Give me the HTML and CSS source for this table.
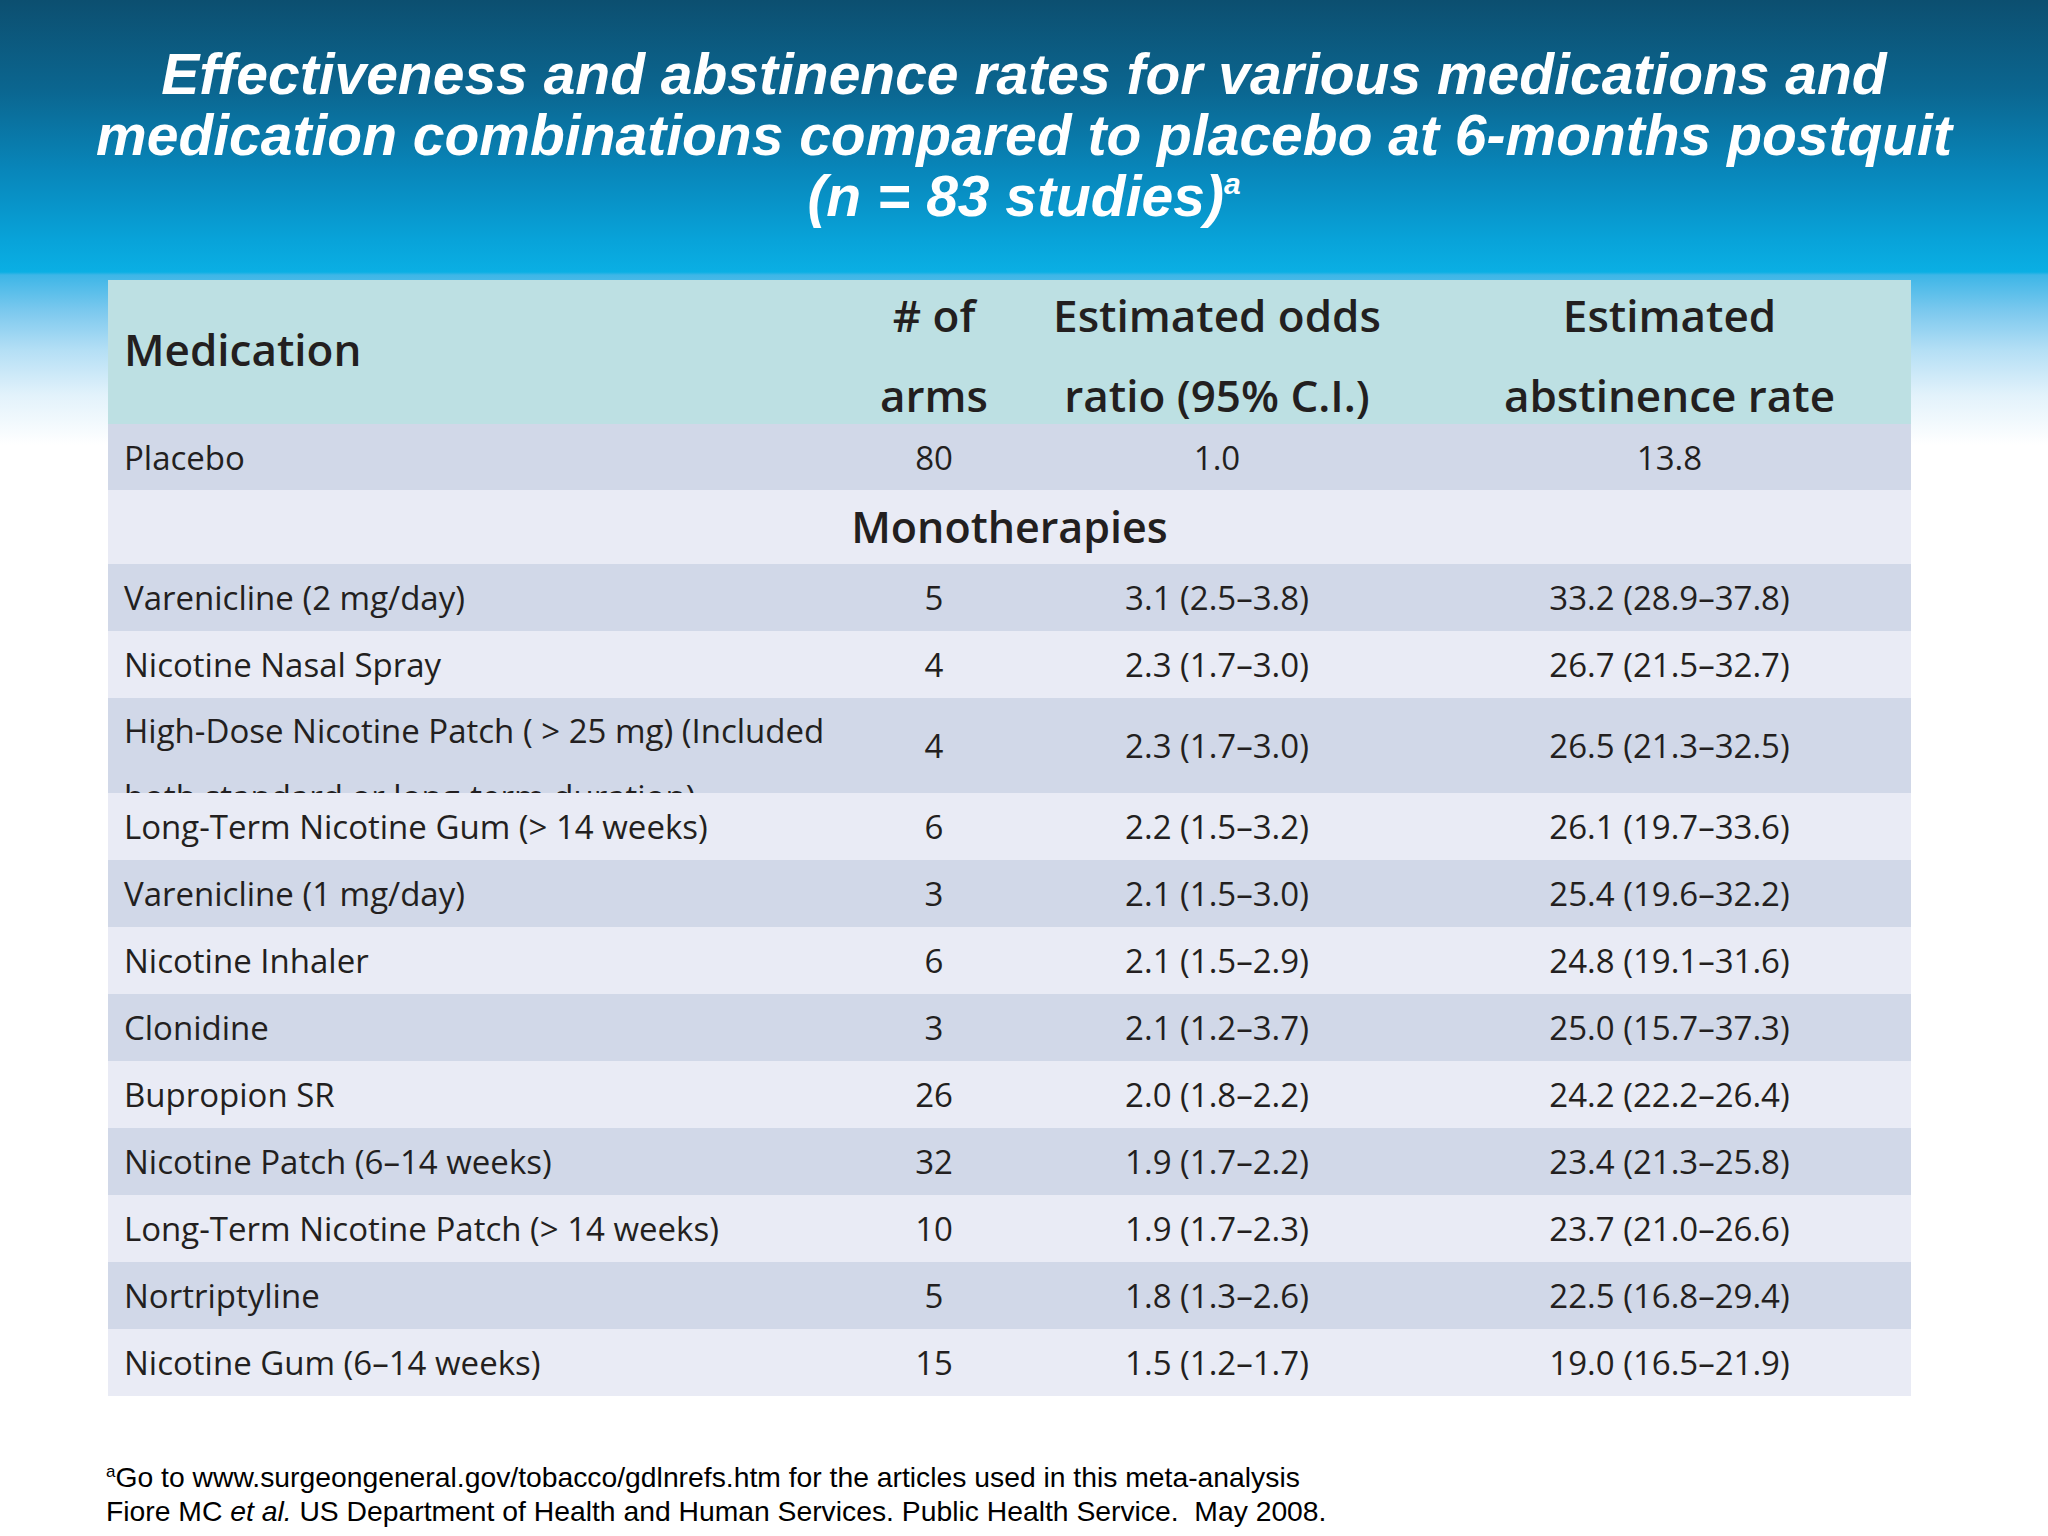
FILE: index.html
```html
<!DOCTYPE html>
<html lang="en">
<head>
<meta charset="utf-8">
<title>Effectiveness and abstinence rates</title>
<link rel="stylesheet" href="styles.css">
</head>
<body>
<div class="slide">
  <h1 class="title">Effectiveness and abstinence rates for various medications and<br>medication combinations compared to placebo at 6-months postquit<br>(n = 83 studies)<sup class="title-sup">a</sup></h1>

  <div class="table">
    <div class="row head">
      <div class="cell med-head">Medication</div>
      <div class="cell num-head">#&nbsp;of<br>arms</div>
      <div class="cell num-head">Estimated odds<br>ratio (95% C.I.)</div>
      <div class="cell num-head">Estimated<br>abstinence rate</div>
    </div>
    <div class="row dark placebo">
      <div class="cell name">Placebo</div>
      <div class="cell val">80</div>
      <div class="cell val">1.0</div>
      <div class="cell val">13.8</div>
    </div>
    <div class="row light section">
      <div class="cell section-title">Monotherapies</div>
    </div>
    <div class="row dark">
      <div class="cell name">Varenicline (2 mg/day)</div>
      <div class="cell val">5</div>
      <div class="cell val">3.1 (2.5–3.8)</div>
      <div class="cell val">33.2 (28.9–37.8)</div>
    </div>
    <div class="row light">
      <div class="cell name">Nicotine Nasal Spray</div>
      <div class="cell val">4</div>
      <div class="cell val">2.3 (1.7–3.0)</div>
      <div class="cell val">26.7 (21.5–32.7)</div>
    </div>
    <div class="row dark tall">
      <div class="cell name wrap">High-Dose Nicotine Patch ( &gt; 25 mg) (Included<br>both standard or long-term duration)</div>
      <div class="cell val">4</div>
      <div class="cell val">2.3 (1.7–3.0)</div>
      <div class="cell val">26.5 (21.3–32.5)</div>
    </div>
    <div class="row light">
      <div class="cell name">Long-Term Nicotine Gum (&gt; 14 weeks)</div>
      <div class="cell val">6</div>
      <div class="cell val">2.2 (1.5–3.2)</div>
      <div class="cell val">26.1 (19.7–33.6)</div>
    </div>
    <div class="row dark">
      <div class="cell name">Varenicline (1 mg/day)</div>
      <div class="cell val">3</div>
      <div class="cell val">2.1 (1.5–3.0)</div>
      <div class="cell val">25.4 (19.6–32.2)</div>
    </div>
    <div class="row light">
      <div class="cell name">Nicotine Inhaler</div>
      <div class="cell val">6</div>
      <div class="cell val">2.1 (1.5–2.9)</div>
      <div class="cell val">24.8 (19.1–31.6)</div>
    </div>
    <div class="row dark">
      <div class="cell name">Clonidine</div>
      <div class="cell val">3</div>
      <div class="cell val">2.1 (1.2–3.7)</div>
      <div class="cell val">25.0 (15.7–37.3)</div>
    </div>
    <div class="row light">
      <div class="cell name">Bupropion SR</div>
      <div class="cell val">26</div>
      <div class="cell val">2.0 (1.8–2.2)</div>
      <div class="cell val">24.2 (22.2–26.4)</div>
    </div>
    <div class="row dark">
      <div class="cell name">Nicotine Patch (6–14 weeks)</div>
      <div class="cell val">32</div>
      <div class="cell val">1.9 (1.7–2.2)</div>
      <div class="cell val">23.4 (21.3–25.8)</div>
    </div>
    <div class="row light">
      <div class="cell name">Long-Term Nicotine Patch (&gt; 14 weeks)</div>
      <div class="cell val">10</div>
      <div class="cell val">1.9 (1.7–2.3)</div>
      <div class="cell val">23.7 (21.0–26.6)</div>
    </div>
    <div class="row dark">
      <div class="cell name">Nortriptyline</div>
      <div class="cell val">5</div>
      <div class="cell val">1.8 (1.3–2.6)</div>
      <div class="cell val">22.5 (16.8–29.4)</div>
    </div>
    <div class="row light">
      <div class="cell name">Nicotine Gum (6–14 weeks)</div>
      <div class="cell val">15</div>
      <div class="cell val">1.5 (1.2–1.7)</div>
      <div class="cell val">19.0 (16.5–21.9)</div>
    </div>
  </div>

  <div class="footnote">
    <div class="fn-line"><sup class="fn-sup">a</sup>Go to www.surgeongeneral.gov/tobacco/gdlnrefs.htm for the articles used in this meta-analysis</div>
    <div class="fn-line">Fiore MC <em>et al.</em> US Department of Health and Human Services. Public Health Service.&nbsp; May 2008.</div>
  </div>
</div>
</body>
</html>
```

FILE: styles.css
```css
html, body {
  margin: 0;
  padding: 0;
}

body {
  width: 2048px;
  height: 1536px;
  overflow: hidden;
  background: linear-gradient(to bottom,
    #0c4f70 0px,
    #0b6690 90px,
    #0886ba 170px,
    #08a3d9 240px,
    #0aafe4 272px,
    #3db6e7 275px,
    #7ac8ee 310px,
    #b4dff5 350px,
    #e2f2fb 395px,
    #ffffff 445px,
    #ffffff 100%);
}

.slide {
  display: flex;
  flex-direction: column;
  padding-top: 44px;
}

.title {
  margin: 0;
  font-family: "Liberation Sans", Arial, sans-serif;
  font-weight: bold;
  font-style: italic;
  font-size: 57px;
  line-height: 61px;
  color: #ffffff;
  text-align: center;
}

.title-sup {
  font-size: 30px;
  vertical-align: 22px;
  line-height: 0;
}

.table {
  margin-top: 53px;
  margin-left: 108px;
  width: 1803px;
  display: flex;
  flex-direction: column;
  font-family: "Open Sans", "Noto Sans", sans-serif;
  color: #231f20;
}

.row {
  display: grid;
  grid-template-columns: 754px 144px 422px 483px;
  height: 67px;
  align-items: center;
}

.row.dark { background: #d1d8e8; }
.row.light { background: #e9ebf5; }

.row.head {
  height: 144px;
  background: #bde0e3;
  align-items: start;
}

.row.placebo { height: 66px; }
.row.section { height: 74px; }

.row.tall {
  height: 95px;
}

.cell {
  font-size: 33px;
  line-height: 67px;
  white-space: nowrap;
}

.med-head {
  align-self: center;
  padding-left: 16px;
  padding-bottom: 18px;
  font-size: 44px;
  font-weight: 600;
  line-height: 60px;
}

.num-head {
  text-align: center;
  font-size: 44px;
  font-weight: 600;
  line-height: 80px;
  margin-top: -5px;
}

.name {
  padding-left: 16px;
}

.name.wrap {
  align-self: start;
  height: 95px;
  overflow: hidden;
  line-height: 66px;
}

.val {
  text-align: center;
}

.section-title {
  grid-column: 1 / -1;
  text-align: center;
  font-size: 43px;
  font-weight: 600;
  line-height: 74px;
}

.footnote {
  margin-top: 64px;
  padding-left: 106px;
  font-family: "Liberation Sans", Arial, sans-serif;
  font-size: 28.3px;
  line-height: 34px;
  color: #000000;
}

.fn-sup {
  font-size: 17px;
  vertical-align: 10px;
  line-height: 0;
}
```
